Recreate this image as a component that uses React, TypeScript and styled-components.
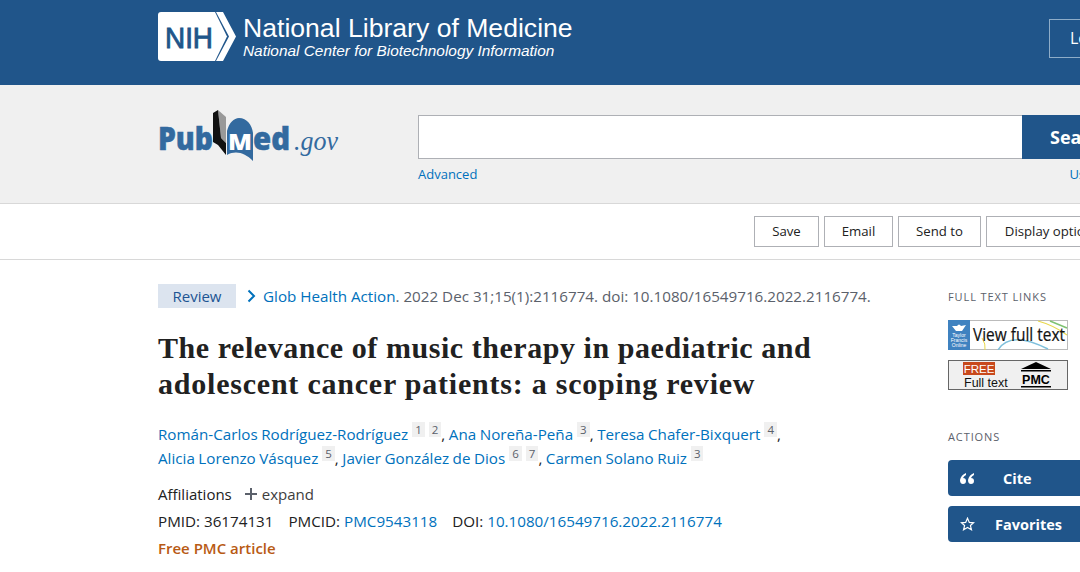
import React from 'react'
import styled, { createGlobalStyle } from 'styled-components'

const Global = createGlobalStyle`
  html, body {
    margin: 0;
    padding: 0;
    width: 1080px;
    height: 572px;
    overflow: hidden;
    background: #fff;
    font-family: 'Open Sans', 'Liberation Sans', sans-serif;
    color: #212121;
  }
`

const Page = styled.div`
  width: 1080px;
  height: 572px;
  overflow: hidden;
`

const Banner = styled.header`
  height: 85px;
  background: #20558a;
  display: flex;
  padding: 12px 0 0 158px;
  box-sizing: border-box;
  align-items: flex-start;
`

const BannerLogo = styled.svg`
  flex: none;
`

const BannerText = styled.div`
  flex: none;
  margin-left: 7px;
  width: 806px;
  color: #fff;
  font-family: 'Liberation Sans', Arial, sans-serif;
`

const BannerTitle = styled.div`
  font-size: 26.6px;
  line-height: 30px;
  margin-top: 1px;
`

const BannerSub = styled.div`
  font-size: 15.4px;
  line-height: 16px;
  font-style: italic;
`

const LoginButton = styled.div`
  flex: none;
  width: 100px;
  height: 39px;
  margin-top: 7px;
  box-sizing: border-box;
  border: 1px solid #8fadc8;
  color: #fff;
  font-size: 16px;
  line-height: 37px;
  padding-left: 20px;
  white-space: nowrap;
`

const SearchBand = styled.section`
  height: 119px;
  box-sizing: border-box;
  background: #f0f0f0;
  border-bottom: 1px solid #d8d8d8;
  display: flex;
  padding: 30px 0 0 158px;
`

const Logo = styled.div`
  flex: none;
  width: 260px;
  height: 60px;
  margin-top: -6px;
`

const SearchCol = styled.div`
  flex: none;
  width: 760px;
`

const SearchRow = styled.div`
  display: flex;
  height: 44px;
`

const SearchInput = styled.div`
  width: 604px;
  box-sizing: border-box;
  background: #fff;
  border: 1px solid #aeb0b5;
  border-right: 0;
`

const SearchButton = styled.div`
  width: 156px;
  background: #20558a;
  color: #fff;
  font-size: 18px;
  font-weight: 700;
  line-height: 44px;
  padding-left: 28px;
  box-sizing: border-box;
`

const SearchLinks = styled.div`
  display: flex;
  justify-content: space-between;
  font-size: 13px;
  line-height: 18px;
  margin-top: 6px;
  padding-right: 41px;
`

const Link = styled.a`
  color: #0071bc;
  text-decoration: none;
`

const Toolbar = styled.div`
  height: 56px;
  box-sizing: border-box;
  border-bottom: 1px solid #d8d8d8;
  display: flex;
  gap: 5px;
  padding: 12px 0 0 754px;
`

const ToolButton = styled.div<{ $w: number }>`
  flex: none;
  width: ${p => p.$w}px;
  height: 31px;
  box-sizing: border-box;
  border: 1px solid #aeb0b5;
  font-size: 13.2px;
  line-height: 29px;
  text-align: center;
  white-space: nowrap;
  color: #212121;
`

const Main = styled.main`
  display: flex;
  padding: 24px 0 0 158px;
`

const Article = styled.article`
  flex: none;
  width: 790px;
`

const CitationRow = styled.div`
  display: flex;
  align-items: center;
  height: 24px;
  font-size: 15.2px;
  color: #5b616b;
  white-space: pre;
`

const Badge = styled.span`
  width: 78px;
  height: 24px;
  background: #dce4ef;
  color: #205493;
  font-size: 15px;
  line-height: 24px;
  text-align: center;
  margin-right: 11px;
`

const Chevron = styled.svg`
  width: 9px;
  height: 14px;
  margin-right: 7px;
`

const Title = styled.h1`
  margin: 22px 0 0;
  font-family: 'Liberation Serif', 'Times New Roman', serif;
  font-size: 30px;
  line-height: 36px;
  font-weight: 700;
  color: #212121;
`

const TitleLine = styled.span<{ $spacing: number }>`
  display: block;
  letter-spacing: ${p => p.$spacing}px;
`

const Authors = styled.div`
  margin-top: 20px;
  font-size: 15.2px;
  word-spacing: -0.4px;
  line-height: 24px;
  white-space: nowrap;
`

const Sup = styled.sup`
  display: inline-block;
  background: #f0f0f0;
  color: #5b616b;
  font-size: 11.5px;
  line-height: 15px;
  padding: 0 3px;
  margin-left: 4px;
  vertical-align: 6px;
`

const Affiliations = styled.div`
  margin-top: 12px;
  display: flex;
  align-items: center;
  font-size: 15px;
  line-height: 24px;
`

const Expand = styled.span`
  display: flex;
  align-items: center;
  gap: 5px;
  margin-left: 13px;
  color: #3d3d3d;
`

const Ids = styled.div`
  margin-top: 3px;
  font-size: 15.2px;
  line-height: 24px;
  display: flex;
  gap: 15px;
`

const FreeTag = styled.div`
  margin-top: 3px;
  font-size: 15px;
  line-height: 24px;
  font-weight: 600;
  color: #b85a14;
`

const Side = styled.aside`
  flex: none;
  width: 180px;
`

const SideHead = styled.h3<{ $top: number }>`
  margin: ${p => p.$top}px 0 0;
  font-size: 11px;
  line-height: 16px;
  font-weight: 400;
  letter-spacing: 0.9px;
  color: #5b616b;
`

const FullTextLink = styled.div<{ $first?: boolean }>`
  width: 120px;
  height: 30px;
  box-sizing: border-box;
  margin-top: ${p => (p.$first ? 15 : 10)}px;
`

const ActionButton = styled.div<{ $first?: boolean }>`
  display: flex;
  align-items: center;
  height: 36px;
  margin-top: ${p => (p.$first ? 15 : 10)}px;
  background: #20558a;
  border-radius: 4px 0 0 4px;
  color: #fff;
  font-size: 14.5px;
  font-weight: 700;
`

const ActionIcon = styled.span`
  flex: none;
  width: 15px;
  margin-left: 12px;
  display: flex;
  justify-content: center;
`

const ActionLabel = styled.span<{ $left: number }>`
  margin-left: ${p => p.$left}px;
`

const NihLogo = () => (
  <BannerLogo width="78" height="49" viewBox="0 0 78 49">
    <path d="M3 0H57L69 24.5L57 49H3Q0 49 0 46V3Q0 0 3 0Z" fill="#fff" />
    <path d="M58 0H65L78 24.5L65 49H58L71 24.5Z" fill="#fff" />
    <text x="7" y="35.5" textLength="48" lengthAdjust="spacingAndGlyphs" fontFamily="'Liberation Sans', Arial, sans-serif" fontSize="30" fill="#20558a" stroke="#20558a" strokeWidth="0.9">NIH</text>
  </BannerLogo>
)

const PubmedLogo = () => (
  <svg width="190" height="60" viewBox="0 0 190 60">
    <path d="M60 1L68 8V34L63 29Z" fill="#999" />
    <path d="M55 4L60 1L63 29L68 34V46L60 36L55 33Z" fill="#111" />
    <path d="M69 22C71 14 76 9 81 9C89 9 94 16 95 24V52C87 44 78 41 69 46Z" fill="#336a9f" />
    <text x="0" y="41" textLength="55" lengthAdjust="spacingAndGlyphs" fontFamily="'Open Sans', sans-serif" fontWeight="800" fontSize="32" fill="#336a9f" stroke="#336a9f" strokeWidth="0.5">Pub</text>
    <text x="70" y="41" textLength="24" lengthAdjust="spacingAndGlyphs" fontFamily="'Open Sans', sans-serif" fontWeight="800" fontSize="22" fill="#fff">M</text>
    <text x="95" y="41" textLength="37" lengthAdjust="spacingAndGlyphs" fontFamily="'Open Sans', sans-serif" fontWeight="800" fontSize="32" fill="#336a9f" stroke="#336a9f" strokeWidth="0.5">ed</text>
    <text x="136" y="41" textLength="44" lengthAdjust="spacingAndGlyphs" fontFamily="'Liberation Serif', serif" fontStyle="italic" fontSize="27" fill="#336a9f">.gov</text>
  </svg>
)

const TaylorLink = () => (
  <svg width="120" height="30" viewBox="0 0 120 30">
    <rect x="0.5" y="0.5" width="119" height="29" fill="#fff" stroke="#bbb" />
    <path d="M34 18Q38 24 37 30" fill="none" stroke="#e8d84a" strokeWidth="1" />
    <path d="M50 30Q62 10 100 29" fill="none" stroke="#7fc0dc" strokeWidth="1.5" />
    <path d="M90 1Q105 5 119 15" fill="none" stroke="#e8d84a" strokeWidth="1.2" />
    <path d="M102 1L119 8" fill="none" stroke="#7fc272" strokeWidth="1.5" />
    <rect width="22" height="30" fill="#3f82c0" />
    <path d="M4 6H9Q11 3 13 6L18 5L14 11H8Z" fill="#fff" />
    <text x="11" y="17" textAnchor="middle" fontFamily="'Liberation Sans', sans-serif" fontSize="5" fill="#fff">Taylor</text>
    <text x="11" y="22" textAnchor="middle" fontFamily="'Liberation Sans', sans-serif" fontSize="5" fill="#fff">Francis</text>
    <text x="11" y="27" textAnchor="middle" fontFamily="'Liberation Sans', sans-serif" fontSize="5" fill="#fff">Online</text>
    <text x="25" y="21" textLength="92" lengthAdjust="spacingAndGlyphs" fontFamily="'Open Sans', sans-serif" fontSize="17.5" fill="#111" stroke="#111" strokeWidth="0.2">View full text</text>
  </svg>
)

const PmcLink = () => (
  <svg width="120" height="30" viewBox="0 0 120 30">
    <rect x="0.5" y="0.5" width="119" height="29" fill="#f0f0f0" stroke="#666" />
    <rect x="15" y="2" width="32" height="13" fill="#c8491c" />
    <text x="31" y="13" textAnchor="middle" fontFamily="'Liberation Sans', sans-serif" fontSize="11.5" fill="#fff">FREE</text>
    <text x="16" y="27" fontFamily="'Liberation Sans', sans-serif" fontSize="12.5" fill="#111">Full text</text>
    <path d="M73 9L88 2L103 9Z" fill="#000" />
    <rect x="73" y="10" width="30" height="1.5" fill="#000" />
    <rect x="73" y="26" width="30" height="1.5" fill="#000" />
    <text x="88" y="24" textAnchor="middle" fontFamily="'Liberation Sans', sans-serif" fontWeight="700" fontSize="12.5" fill="#000">PMC</text>
  </svg>
)

export default function App() {
  return (
    <Page>
      <Global />
      <Banner>
        <NihLogo />
        <BannerText>
          <BannerTitle>National Library of Medicine</BannerTitle>
          <BannerSub>National Center for Biotechnology Information</BannerSub>
        </BannerText>
        <LoginButton>Log in</LoginButton>
      </Banner>
      <SearchBand>
        <Logo><PubmedLogo /></Logo>
        <SearchCol>
          <SearchRow>
            <SearchInput />
            <SearchButton>Search</SearchButton>
          </SearchRow>
          <SearchLinks>
            <Link>Advanced</Link>
            <Link>User Guide</Link>
          </SearchLinks>
        </SearchCol>
      </SearchBand>
      <Toolbar>
        <ToolButton $w={65}>Save</ToolButton>
        <ToolButton $w={69}>Email</ToolButton>
        <ToolButton $w={83}>Send to</ToolButton>
        <ToolButton $w={132}>Display options</ToolButton>
      </Toolbar>
      <Main>
        <Article>
          <CitationRow>
            <Badge>Review</Badge>
            <Chevron viewBox="0 0 9 14"><path d="M1.5 1.5L7 7L1.5 12.5" fill="none" stroke="#0071bc" strokeWidth="2" /></Chevron>
            <Link>Glob Health Action</Link>. 2022 Dec 31;15(1):2116774. doi: 10.1080/16549716.2022.2116774.
          </CitationRow>
          <Title>
            <TitleLine $spacing={0.55}>The relevance of music therapy in paediatric and</TitleLine>
            <TitleLine $spacing={0.78}>adolescent cancer patients: a scoping review</TitleLine>
          </Title>
          <Authors>
            <Link>Román-Carlos Rodríguez-Rodríguez</Link><Sup>1</Sup><Sup>2</Sup>, <Link>Ana Noreña-Peña</Link><Sup>3</Sup>, <Link>Teresa Chafer-Bixquert</Link><Sup>4</Sup>,<br />
            <Link>Alicia Lorenzo Vásquez</Link><Sup>5</Sup>, <Link>Javier González de Dios</Link><Sup>6</Sup><Sup>7</Sup>, <Link>Carmen Solano Ruiz</Link><Sup>3</Sup>
          </Authors>
          <Affiliations>
            Affiliations
            <Expand>
              <svg width="12" height="12" viewBox="0 0 12 12"><path d="M6 0V12M0 6H12" stroke="#5b616b" strokeWidth="2" /></svg>
              expand
            </Expand>
          </Affiliations>
          <Ids>
            <span>PMID: 36174131</span>
            <span>PMCID: <Link>PMC9543118</Link></span>
            <span>DOI: <Link>10.1080/16549716.2022.2116774</Link></span>
          </Ids>
          <FreeTag>Free PMC article</FreeTag>
        </Article>
        <Side>
          <SideHead $top={5}>FULL TEXT LINKS</SideHead>
          <FullTextLink $first><TaylorLink /></FullTextLink>
          <FullTextLink><PmcLink /></FullTextLink>
          <SideHead $top={39}>ACTIONS</SideHead>
          <ActionButton $first>
            <ActionIcon>
              <svg width="15" height="11" viewBox="0 0 15 11"><path d="M6 0Q1 2 0 7Q0 11 3 11Q6 11 6 8Q6 5 3 5Q4 3 6 2ZM14 0Q9 2 8 7Q8 11 11 11Q14 11 14 8Q14 5 11 5Q12 3 14 2Z" fill="#fff" /></svg>
            </ActionIcon>
            <ActionLabel $left={28}>Cite</ActionLabel>
          </ActionButton>
          <ActionButton>
            <ActionIcon>
              <svg width="15" height="14" viewBox="0 0 24 23"><path d="M12 2L15 9L22 9.5L16.8 14L18.5 21L12 17.3L5.5 21L7.2 14L2 9.5L9 9Z" fill="none" stroke="#fff" strokeWidth="2" /></svg>
            </ActionIcon>
            <ActionLabel $left={20}>Favorites</ActionLabel>
          </ActionButton>
        </Side>
      </Main>
    </Page>
  )
}
